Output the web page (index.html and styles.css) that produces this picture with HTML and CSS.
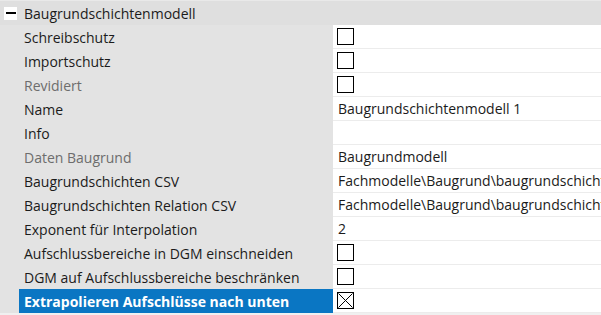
FILE: index.html
```html
<!DOCTYPE html>
<html>
<head>
<meta charset="utf-8">
<link rel="stylesheet" href="styles.css">
</head>
<body>
<div class="grid">
  <div class="header">
    <span class="toggle"><span class="bar"></span></span>
    <span class="htext">Baugrundschichtenmodell</span>
  </div>
  <div class="row"><div class="gut"></div><div class="label">Schreibschutz</div><div class="value"><span class="cb"></span></div></div>
  <div class="row"><div class="gut"></div><div class="label">Importschutz</div><div class="value"><span class="cb"></span></div></div>
  <div class="row"><div class="gut"></div><div class="label dis">Revidiert</div><div class="value"><span class="cb"></span></div></div>
  <div class="row"><div class="gut"></div><div class="label">Name</div><div class="value">Baugrundschichtenmodell 1</div></div>
  <div class="row"><div class="gut"></div><div class="label">Info</div><div class="value"></div></div>
  <div class="row"><div class="gut"></div><div class="label dis">Daten Baugrund</div><div class="value">Baugrundmodell</div></div>
  <div class="row"><div class="gut"></div><div class="label">Baugrundschichten CSV</div><div class="value">Fachmodelle\Baugrund\baugrundschichten.csv</div></div>
  <div class="row"><div class="gut"></div><div class="label">Baugrundschichten Relation CSV</div><div class="value">Fachmodelle\Baugrund\baugrundschichten_relation.csv</div></div>
  <div class="row"><div class="gut"></div><div class="label">Exponent für Interpolation</div><div class="value">2</div></div>
  <div class="row"><div class="gut"></div><div class="label">Aufschlussbereiche in DGM einschneiden</div><div class="value"><span class="cb"></span></div></div>
  <div class="row"><div class="gut"></div><div class="label">DGM auf Aufschlussbereiche beschränken</div><div class="value"><span class="cb"></span></div></div>
  <div class="row sel"><div class="gut"></div><div class="label">Extrapolieren Aufschlüsse nach unten</div><div class="value"><span class="cb checked"><svg width="17" height="17" viewBox="0 0 17 17"><path d="M1.5 1.5 L15.5 15.5 M15.5 1.5 L1.5 15.5" stroke="#000" stroke-width="1"/></svg></span></div></div>
</div>
</body>
</html>
```
FILE: styles.css
```css
html, body {
  margin: 0;
  padding: 0;
  background: #f0f0f0;
}
body {
  font-family: "Open Sans", "Noto Sans", sans-serif;
  font-size: 14px;
  color: #1b1b1b;
  width: 601px;
  height: 315px;
  overflow: hidden;
}
.grid {
  display: flex;
  flex-direction: column;
}
.header {
  height: 24px;
  border-top: 1px solid #e9e9e9;
  background: #dfdfdf;
  display: flex;
  align-items: center;
}
.toggle {
  width: 13px;
  height: 13px;
  background: #fff;
  margin-left: 4px;
  display: flex;
  align-items: center;
  justify-content: center;
}
.bar {
  width: 10px;
  height: 2px;
  background: #000;
}
.htext {
  margin-left: 7px;
  white-space: nowrap;
}
.row {
  display: flex;
  height: 24px;
}
.gut {
  width: 19px;
  background: #e3e3e3;
}
.label {
  width: 309px;
  padding-left: 5px;
  background: #e3e3e3;
  display: flex;
  align-items: center;
  white-space: nowrap;
  overflow: hidden;
}
.label.dis {
  color: #6d6d6d;
}
.value {
  flex: 1;
  background: #fff;
  border-bottom: 1px solid #ececec;
  display: flex;
  align-items: center;
  padding-left: 5px;
  white-space: nowrap;
  overflow: hidden;
}
.cb {
  width: 15px;
  height: 15px;
  border: 1.5px solid #000;
  background: #fff;
  display: block;
  position: relative;
  margin-left: -1px;
}
.cb.checked svg {
  position: absolute;
  left: -1.5px;
  top: -1.5px;
}
.sel .label {
  background: #0a76c3;
  color: #fff;
  font-weight: bold;
}
```
